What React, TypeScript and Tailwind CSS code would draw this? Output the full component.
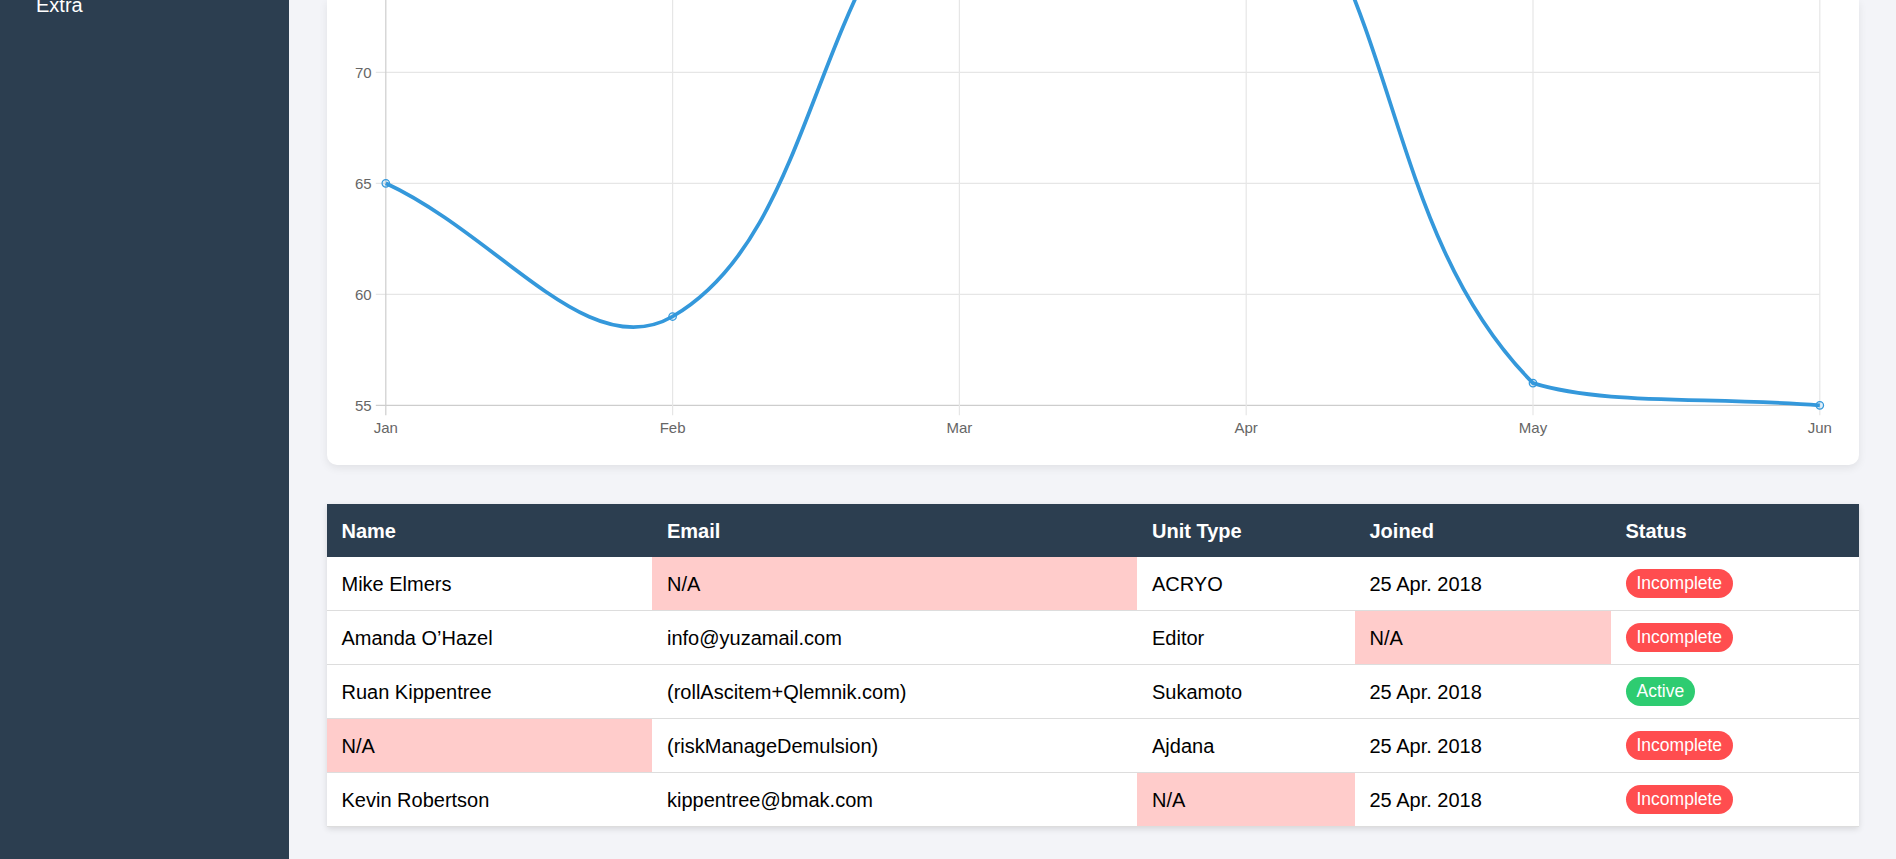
import React from "react";

type Row = {
  name: string;
  email: string;
  unit: string;
  joined: string;
  status: "Incomplete" | "Active";
};

const rows: Row[] = [
  { name: "Mike Elmers", email: "N/A", unit: "ACRYO", joined: "25 Apr. 2018", status: "Incomplete" },
  { name: "Amanda O\u2019Hazel", email: "info@yuzamail.com", unit: "Editor", joined: "N/A", status: "Incomplete" },
  { name: "Ruan Kippentree", email: "(rollAscitem+Qlemnik.com)", unit: "Sukamoto", joined: "25 Apr. 2018", status: "Active" },
  { name: "N/A", email: "(riskManageDemulsion)", unit: "Ajdana", joined: "25 Apr. 2018", status: "Incomplete" },
  { name: "Kevin Robertson", email: "kippentree@bmak.com", unit: "N/A", joined: "25 Apr. 2018", status: "Incomplete" },
];

const X0 = 58.8;
const STEP = 286.8;
const yOf = (v: number) => 405.3 - (v - 55) * 22.2;
const values = [65, 59, 80, 81, 56, 55];
const months = ["Jan", "Feb", "Mar", "Apr", "May", "Jun"];
const AREA_TOP = yOf(85);
const AREA_BOTTOM = yOf(55);

function buildPath() {
  const pts = values.map((v, i) => ({ x: X0 + i * STEP, y: yOf(v) }));
  const t = 0.4;
  const cps = pts.map((p, i) => {
    const prev = i > 0 ? pts[i - 1] : p;
    const next = i < pts.length - 1 ? pts[i + 1] : p;
    const d01 = Math.hypot(p.x - prev.x, p.y - prev.y);
    const d12 = Math.hypot(next.x - p.x, next.y - p.y);
    let s01 = d01 / (d01 + d12);
    let s12 = d12 / (d01 + d12);
    if (isNaN(s01)) s01 = 0;
    if (isNaN(s12)) s12 = 0;
    const fa = t * s01;
    const fb = t * s12;
    const cap = (y: number) => Math.max(Math.min(y, AREA_BOTTOM), AREA_TOP);
    return {
      prev: { x: p.x - fa * (next.x - prev.x), y: cap(p.y - fa * (next.y - prev.y)) },
      next: { x: p.x + fb * (next.x - prev.x), y: cap(p.y + fb * (next.y - prev.y)) },
    };
  });
  let d = `M ${pts[0].x} ${pts[0].y}`;
  for (let i = 0; i < pts.length - 1; i++) {
    const a = cps[i].next;
    const b = cps[i + 1].prev;
    const c = pts[i + 1];
    d += ` C ${a.x} ${a.y} ${b.x} ${b.y} ${c.x} ${c.y}`;
  }
  return { d, pts };
}

function Chart() {
  const { d, pts } = buildPath();
  const ticks = [55, 60, 65, 70, 75, 80, 85];
  const visibleLabels = [55, 60, 65, 70];
  const right = X0 + 5 * STEP;
  return (
    <svg width="1532" height="465" viewBox="0 0 1532 465" className="block">
      {ticks.map((v, i) => (
        <line
          key={`h${v}`}
          x1={48.8}
          x2={right}
          y1={yOf(v)}
          y2={yOf(v)}
          stroke={i === 0 ? "#cdcdcd" : "#e6e6e6"}
          strokeWidth={1.2}
        />
      ))}
      {months.map((m, i) => (
        <line
          key={`v${m}`}
          x1={X0 + i * STEP}
          x2={X0 + i * STEP}
          y1={AREA_TOP}
          y2={415.3}
          stroke={i === 0 ? "#cdcdcd" : "#e6e6e6"}
          strokeWidth={1.2}
        />
      ))}
      {visibleLabels.map((v) => (
        <text
          key={`yl${v}`}
          x={44.6}
          y={yOf(v) + 5.3}
          textAnchor="end"
          fontSize="15"
          fill="#666666"
          fontFamily="'Liberation Sans', Arial, sans-serif"
        >
          {v}
        </text>
      ))}
      {months.map((m, i) => (
        <text
          key={`xl${m}`}
          x={X0 + i * STEP}
          y={433}
          textAnchor="middle"
          fontSize="15"
          fill="#666666"
          fontFamily="'Liberation Sans', Arial, sans-serif"
        >
          {m}
        </text>
      ))}
      <path d={d} fill="none" stroke="#3498db" strokeWidth={3.75} strokeLinejoin="round" />
      {pts.map((p, i) => (
        <circle key={`p${i}`} cx={p.x} cy={p.y} r={3.75} fill="rgba(52,152,219,0.15)" stroke="#3498db" strokeWidth={1.25} />
      ))}
    </svg>
  );
}

function Cell({ children, na }: { children: React.ReactNode; na?: boolean }) {
  return (
    <div className={`flex items-center px-[15px] ${na ? "bg-[#ffcccb]" : ""}`}>{children}</div>
  );
}

function Badge({ status }: { status: Row["status"] }) {
  return (
    <span
      className={`inline-block rounded-full px-[11px] py-[4px] text-[17.5px] leading-[21px] text-white ${
        status === "Active" ? "bg-[#2ecc71]" : "bg-[#ff4d4f]"
      }`}
    >
      {status}
    </span>
  );
}

const cols = "grid grid-cols-[325.5px_485px_217.5px_256px_1fr]";

export default function App() {
  return (
    <div className="flex h-[859px] overflow-hidden bg-[#f3f4f8] font-['Liberation_Sans',Arial,sans-serif]">
      <aside className="w-[289px] shrink-0 bg-[#2c3e50] text-white">
        <div className="-mt-[9px] pl-9 text-xl leading-7">Extra</div>
      </aside>
      <main className="flex min-w-0 flex-1 flex-col px-[37.5px]">
        <section className="mb-[39px] h-[465px] overflow-hidden rounded-b-[10px] bg-white shadow-[0_3px_8px_rgba(0,0,0,0.08)]">
          <Chart />
        </section>
        <div className="bg-white text-xl text-black shadow-[0_2px_6px_rgba(0,0,0,0.12)]">
          <div className={`${cols} h-[53px] bg-[#2c3e50] font-bold text-white`}>
            <Cell>Name</Cell>
            <Cell>Email</Cell>
            <Cell>Unit Type</Cell>
            <Cell>Joined</Cell>
            <Cell>Status</Cell>
          </div>
          {rows.map((r, i) => (
            <div key={i} className={`${cols} h-[54px] border-b border-[#dddddd]`}>
              <Cell na={r.name === "N/A"}>{r.name}</Cell>
              <Cell na={r.email === "N/A"}>{r.email}</Cell>
              <Cell na={r.unit === "N/A"}>{r.unit}</Cell>
              <Cell na={r.joined === "N/A"}>{r.joined}</Cell>
              <Cell>
                <Badge status={r.status} />
              </Cell>
            </div>
          ))}
        </div>
      </main>
    </div>
  );
}
